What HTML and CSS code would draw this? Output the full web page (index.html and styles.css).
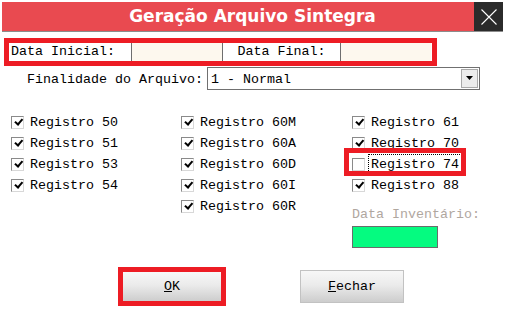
FILE: index.html
```html
<!DOCTYPE html>
<html lang="pt-BR">
<head>
    <meta charset="UTF-8">
    <title>Geração Arquivo Sintegra</title>
    <link rel="stylesheet" href="styles.css">
</head>
<body>
    <div class="janela">
        <div class="titulo">
            <div class="titulo-texto">Geração Arquivo Sintegra</div>
            <div class="fechar-x">
                <svg width="16" height="16" viewBox="0 0 16 16">
                    <path d="M0.5 0.5 L15.5 15.5 M15.5 0.5 L0.5 15.5" stroke="#fff" stroke-width="1.1"/>
                </svg>
            </div>
        </div>

        <div class="datas">
            <span class="rotulo inicial">Data Inicial:</span>
            <span class="campo-data"></span>
            <span class="rotulo final">Data Final:</span>
            <span class="campo-data"></span>
        </div>

        <div class="finalidade">
            <span class="rotulo-fin">Finalidade do Arquivo:</span>
            <div class="combo">
                <span class="combo-valor">1 - Normal</span>
                <span class="combo-botao">
                    <svg width="9" height="5" viewBox="0 0 9 5"><path d="M1 0 H8 L4.5 4 Z" fill="#000"/></svg>
                </span>
            </div>
        </div>

        <div class="registros">
            <!-- coluna 1 -->
            <div class="coluna">
                <label class="item"><span class="caixa marcada"></span>Registro 50</label>
                <label class="item"><span class="caixa marcada"></span>Registro 51</label>
                <label class="item"><span class="caixa marcada"></span>Registro 53</label>
                <label class="item"><span class="caixa marcada"></span>Registro 54</label>
            </div>
            <!-- coluna 2 -->
            <div class="coluna">
                <label class="item"><span class="caixa marcada"></span>Registro 60M</label>
                <label class="item"><span class="caixa marcada"></span>Registro 60A</label>
                <label class="item"><span class="caixa marcada"></span>Registro 60D</label>
                <label class="item"><span class="caixa marcada"></span>Registro 60I</label>
                <label class="item"><span class="caixa marcada"></span>Registro 60R</label>
            </div>
            <!-- coluna 3 -->
            <div class="coluna">
                <label class="item"><span class="caixa marcada"></span>Registro 61</label>
                <label class="item"><span class="caixa marcada"></span>Registro 70</label>
                <label class="item destaque"><span class="caixa"></span><span class="foco">Registro 74</span></label>
                <label class="item"><span class="caixa marcada"></span>Registro 88</label>
                <div class="inventario">Data Inventário:</div>
                <div class="campo-inventario"></div>
            </div>
        </div>

        <div class="botoes">
            <div class="borda-ok"><button class="botao"><u>O</u>K</button></div>
            <button class="botao fechar"><u>F</u>echar</button>
        </div>
    </div>
</body>
</html>
```

FILE: styles.css
```css
body {
    margin: 0;
    background: #fff;
    font-family: "Liberation Mono", "Courier New", monospace;
    font-size: 13.33px;
    color: #000;
}
.janela {
    width: 505px;
    height: 332px;
    overflow: hidden;
}
.titulo {
    display: flex;
    margin: 2px 2px 0 2px;
    height: 29px;
    border-bottom: 1px solid #8c8c8c;
}
.titulo-texto {
    flex: 1;
    background: #e94a50;
    color: #fff;
    font-family: "DejaVu Sans", Verdana, sans-serif;
    font-weight: bold;
    font-size: 17px;
    text-align: center;
    line-height: 29px;
    padding-left: 29px;
}
.fechar-x {
    width: 29px;
    background: #2b2b2b;
    display: flex;
    align-items: center;
    justify-content: center;
}
.datas {
    display: flex;
    margin: 6px 0 0 4px;
    width: 423px;
    height: 18px;
    border: 5px solid #ed1c24;
    line-height: 18px;
}
.rotulo.inicial {
    width: 120px;
    padding-left: 2px;
}
.rotulo.final {
    width: 117px;
    text-align: center;
}
.campo-data {
    width: 90px;
    background: #fdf8ee;
    border-left: 1px solid #6e6e6e;
    border-right: 1px solid #6e6e6e;
}
.campo-data:last-child {
    border-right: none;
}
.finalidade {
    display: flex;
    align-items: center;
    margin-top: 1px;
    height: 23px;
}
.rotulo-fin {
    width: 203px;
    text-align: right;
    padding-right: 4px;
    padding-top: 2px;
}
.combo {
    display: flex;
    align-items: center;
    width: 271px;
    height: 21px;
    border: 1px solid #707070;
}
.combo-valor {
    flex: 1;
    padding-left: 3px;
    padding-top: 1px;
}
.combo-botao {
    width: 15px;
    height: 17px;
    margin-right: 1px;
    border: 1px solid #a9a9a9;
    background: #ececec;
    display: flex;
    align-items: center;
    justify-content: center;
}
.registros {
    display: flex;
    margin-top: 22px;
    padding-left: 11px;
}
.coluna {
    display: flex;
    flex-direction: column;
    flex: none;
    width: 170px;
}
.coluna:nth-child(2) {
    width: 171px;
}
.coluna:nth-child(3) {
    width: 140px;
}
.item {
    display: flex;
    align-items: center;
    height: 21px;
    position: relative;
}
.caixa {
    width: 11px;
    height: 11px;
    border: 1px solid #8a8a8a;
    border-right-color: #d8d8d8;
    border-bottom-color: #d8d8d8;
    background: #fff;
    margin-right: 6px;
    box-sizing: content-box;
    position: relative;
}
.caixa.marcada::after {
    content: "";
    position: absolute;
    left: 2px;
    top: 1px;
    width: 6px;
    height: 3px;
    border-left: 2px solid #000;
    border-bottom: 2px solid #000;
    transform: rotate(-50deg) translate(0px, 1px);
}
.destaque::before {
    content: "";
    position: absolute;
    left: -8px;
    top: -6px;
    width: 112px;
    height: 18px;
    border: 5px solid #ed1c24;
}
.foco {
    outline: 1px dotted #000;
    outline-offset: 1px;
    padding: 1px 1px;
    margin-left: -1px;
}
.inventario {
    color: #b0a79f;
    margin-top: 11px;
    height: 15px;
    line-height: 15px;
}
.campo-inventario {
    margin-top: 4px;
    width: 84px;
    height: 20px;
    background: #05fb80;
    border: 1px solid #6b6b6b;
}
.botoes {
    display: flex;
    align-items: center;
    margin-top: 19px;
    padding-left: 118px;
    gap: 74px;
}
.borda-ok {
    border: 5px solid #ed1c24;
    display: flex;
}
.botao {
    font-family: "Liberation Mono", "Courier New", monospace;
    font-size: 13.33px;
    color: #000;
    width: 98px;
    height: 29px;
    border: none;
    background: linear-gradient(#f7f7f7 0%, #ebebeb 45%, #cdcdcd 100%);
    padding: 0;
}
.botao.fechar {
    width: 104px;
    height: 33px;
    border: 1px solid #c2c2c2;
}
```
